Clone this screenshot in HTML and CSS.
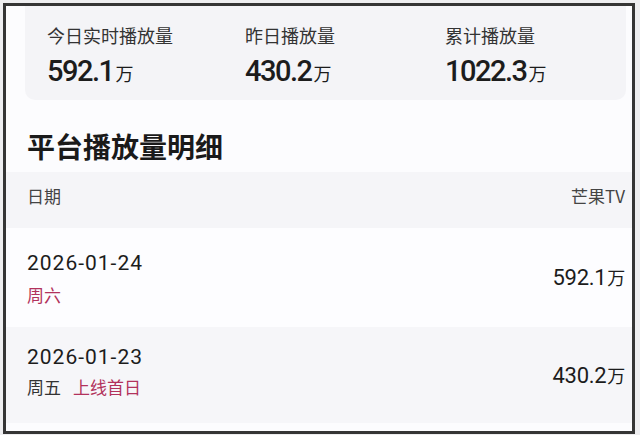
FILE: index.html
```html
<!DOCTYPE html>
<html lang="zh-CN">
<head>
<meta charset="utf-8">
<title>平台播放量明细</title>
<link rel="stylesheet" href="styles.css">
</head>
<body>
<div class="frame">
  <div class="stats">
    <div class="stat">
      <div class="stat-label">今日实时播放量</div>
      <div class="stat-value">592.1<span class="unit">万</span></div>
    </div>
    <div class="stat">
      <div class="stat-label">昨日播放量</div>
      <div class="stat-value">430.2<span class="unit">万</span></div>
    </div>
    <div class="stat">
      <div class="stat-label">累计播放量</div>
      <div class="stat-value">1022.3<span class="unit">万</span></div>
    </div>
  </div>
  <h2 class="title">平台播放量明细</h2>
  <div class="table">
    <div class="thead">
      <span>日期</span>
      <span>芒果TV</span>
    </div>
    <div class="row row-a">
      <div class="date-col">
        <div class="date">2026-01-24</div>
        <div class="sub"><span class="red">周六</span></div>
      </div>
      <div class="val">592.1<span class="unit-s">万</span></div>
    </div>
    <div class="row row-b">
      <div class="date-col">
        <div class="date">2026-01-23</div>
        <div class="sub"><span>周五</span><span class="red tag">上线首日</span></div>
      </div>
      <div class="val">430.2<span class="unit-s">万</span></div>
    </div>
  </div>
</div>
</body>
</html>
```

FILE: styles.css
```css
html, body {
  margin: 0;
  padding: 0;
}
body {
  background: #eeeef0;
  width: 640px;
  height: 435px;
  overflow: hidden;
  font-family: Roboto, "Noto Sans CJK SC", sans-serif;
  color: #222;
}
.frame {
  margin: 3px 0 0 3px;
  width: 626px;
  height: 425px;
  border: 3px solid #353535;
  background: #fcfcfe;
  overflow: hidden;
}
.stats {
  margin: 0 6px 0 19px;
  height: 94px;
  background: #f4f4f7;
  border-radius: 0 0 10px 10px;
  display: grid;
  grid-template-columns: 198px 200px 1fr;
  padding-left: 22px;
  box-sizing: border-box;
}
.stat {
  padding-top: 17px;
}
.stat-label {
  font-family: "Noto Sans CJK SC", sans-serif;
  font-size: 18px;
  line-height: 24px;
  color: #333;
}
.stat-value {
  margin-top: 8px;
  font-size: 29px;
  line-height: 32px;
  font-weight: 500;
  color: #1c1c1c;
  letter-spacing: -1.5px;
}
.unit {
  font-family: "Noto Sans CJK SC", sans-serif;
  font-size: 18px;
  font-weight: 400;
  letter-spacing: 0;
  margin-left: 2px;
}
.title {
  margin: 0;
  padding: 26px 0 6px 21px;
  font-family: "Noto Sans CJK SC", sans-serif;
  font-size: 28px;
  line-height: 40px;
  font-weight: 700;
  color: #1a1a1a;
}
.thead {
  height: 56px;
  box-sizing: border-box;
  padding: 12px 7px 0 21px;
  background: #f5f5f8;
  display: flex;
  justify-content: space-between;
  font-family: "Noto Sans CJK SC", sans-serif;
  font-size: 17px;
  line-height: 24px;
  color: #444;
}
.row {
  display: flex;
  justify-content: space-between;
  align-items: center;
  padding: 0 7px 0 21px;
}
.row-a {
  height: 99px;
  background: #fdfdff;
}
.row-a .date-col {
  padding-top: 2px;
}
.row-a .sub {
  margin-top: 7px;
}
.row-b {
  height: 96px;
  background: #f6f6f9;
}
.row-b .date-col {
  margin-top: -8px;
}
.row-b .sub {
  margin-top: 5px;
}
.date {
  font-size: 21px;
  line-height: 26px;
  letter-spacing: 1px;
  color: #1c1c1c;
}
.sub {
  font-family: "Noto Sans CJK SC", sans-serif;
  font-size: 17px;
  line-height: 24px;
  color: #333;
}
.red {
  color: #b2325c;
}
.tag {
  margin-left: 12px;
}
.val {
  font-size: 22px;
  line-height: 28px;
  letter-spacing: -0.3px;
  color: #1c1c1c;
}
.unit-s {
  font-family: "Noto Sans CJK SC", sans-serif;
  font-size: 18px;
  margin-left: 1px;
}
```
